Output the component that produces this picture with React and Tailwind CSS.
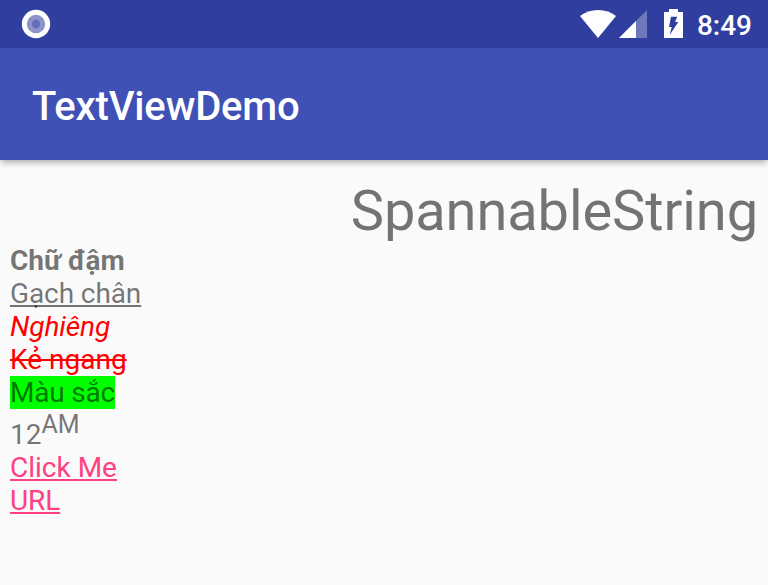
import React from "react";

function StatusBar() {
  return (
    <div className="flex h-12 shrink-0 items-center justify-between bg-[#303f9f] pl-[21px] pr-4 text-white">
      <svg width="30" height="30" viewBox="0 0 30 30">
        <circle cx="15" cy="15" r="14.2" fill="#fff" />
        <circle cx="15" cy="15" r="9.2" fill="#8b93cb" />
        <circle cx="15" cy="15" r="4.2" fill="#636eb7" />
      </svg>
      <div className="flex items-center">
        <svg width="36" height="28" viewBox="0 0 36 28" fill="#fff">
          <path d="M0 6C5 2 11 0 18 0s13 2 18 6L18 28z" />
        </svg>
        <svg className="ml-[3px]" width="28" height="28" viewBox="0 0 28 28" fill="#fff">
          <path d="M28 0v28H0z" opacity=".3" />
          <path d="M17 11v17H0z" />
        </svg>
        <svg className="ml-[17px]" width="20" height="30" viewBox="0 0 20 30">
          <path d="M5 0h9v3h5v26H0V3h5z" fill="#fff" />
          <path d="M7 7.7h6.3L11 13h3.3L5.7 26l2-8H5z" fill="#303f9f" />
        </svg>
        <span className="ml-[13px] pt-[3px] text-[28px] font-medium leading-none">8:49</span>
      </div>
    </div>
  );
}

export default function App() {
  return (
    <div className="flex h-screen flex-col overflow-hidden bg-[#fafafa] font-['Roboto',sans-serif] text-black/54">
      <StatusBar />
      <header className="flex h-28 shrink-0 items-center bg-[#3f51b5] px-8 pt-[5px] shadow-[0_3px_7px_-1px_rgba(0,0,0,0.35)] [clip-path:inset(0_0_-12px_0)]">
        <h1 className="text-[40px] font-medium leading-none tracking-[-0.17px] text-white">TextViewDemo</h1>
      </header>
      <main className="px-[10px] pt-[18px]">
        <h2 className="text-right text-[56px] leading-[66px] tracking-[-0.1px]">SpannableString</h2>
        <div className="text-[28px] leading-[33px] [text-decoration-skip-ink:none]">
          <p className="font-bold">Chữ đậm</p>
          <p className="tracking-[-0.1px] underline decoration-2 underline-offset-2">Gạch chân</p>
          <p className="italic text-[#ff0000] tracking-[-0.1px]">Nghiêng</p>
          <p className="text-[#ff0000] line-through decoration-2">Kẻ ngang</p>
          <p className="w-fit bg-[#00ff00] tracking-[-0.2px]">Màu sắc</p>
          <p className="h-[42px] pt-[9px]">
            12<span className="relative -top-[11px] text-[25px]">AM</span>
          </p>
          <p className="text-[#ff4081] underline decoration-2 underline-offset-2">Click Me</p>
          <p className="tracking-[-0.1px] text-[#ff4081] underline decoration-2 underline-offset-2">URL</p>
        </div>
      </main>
    </div>
  );
}
